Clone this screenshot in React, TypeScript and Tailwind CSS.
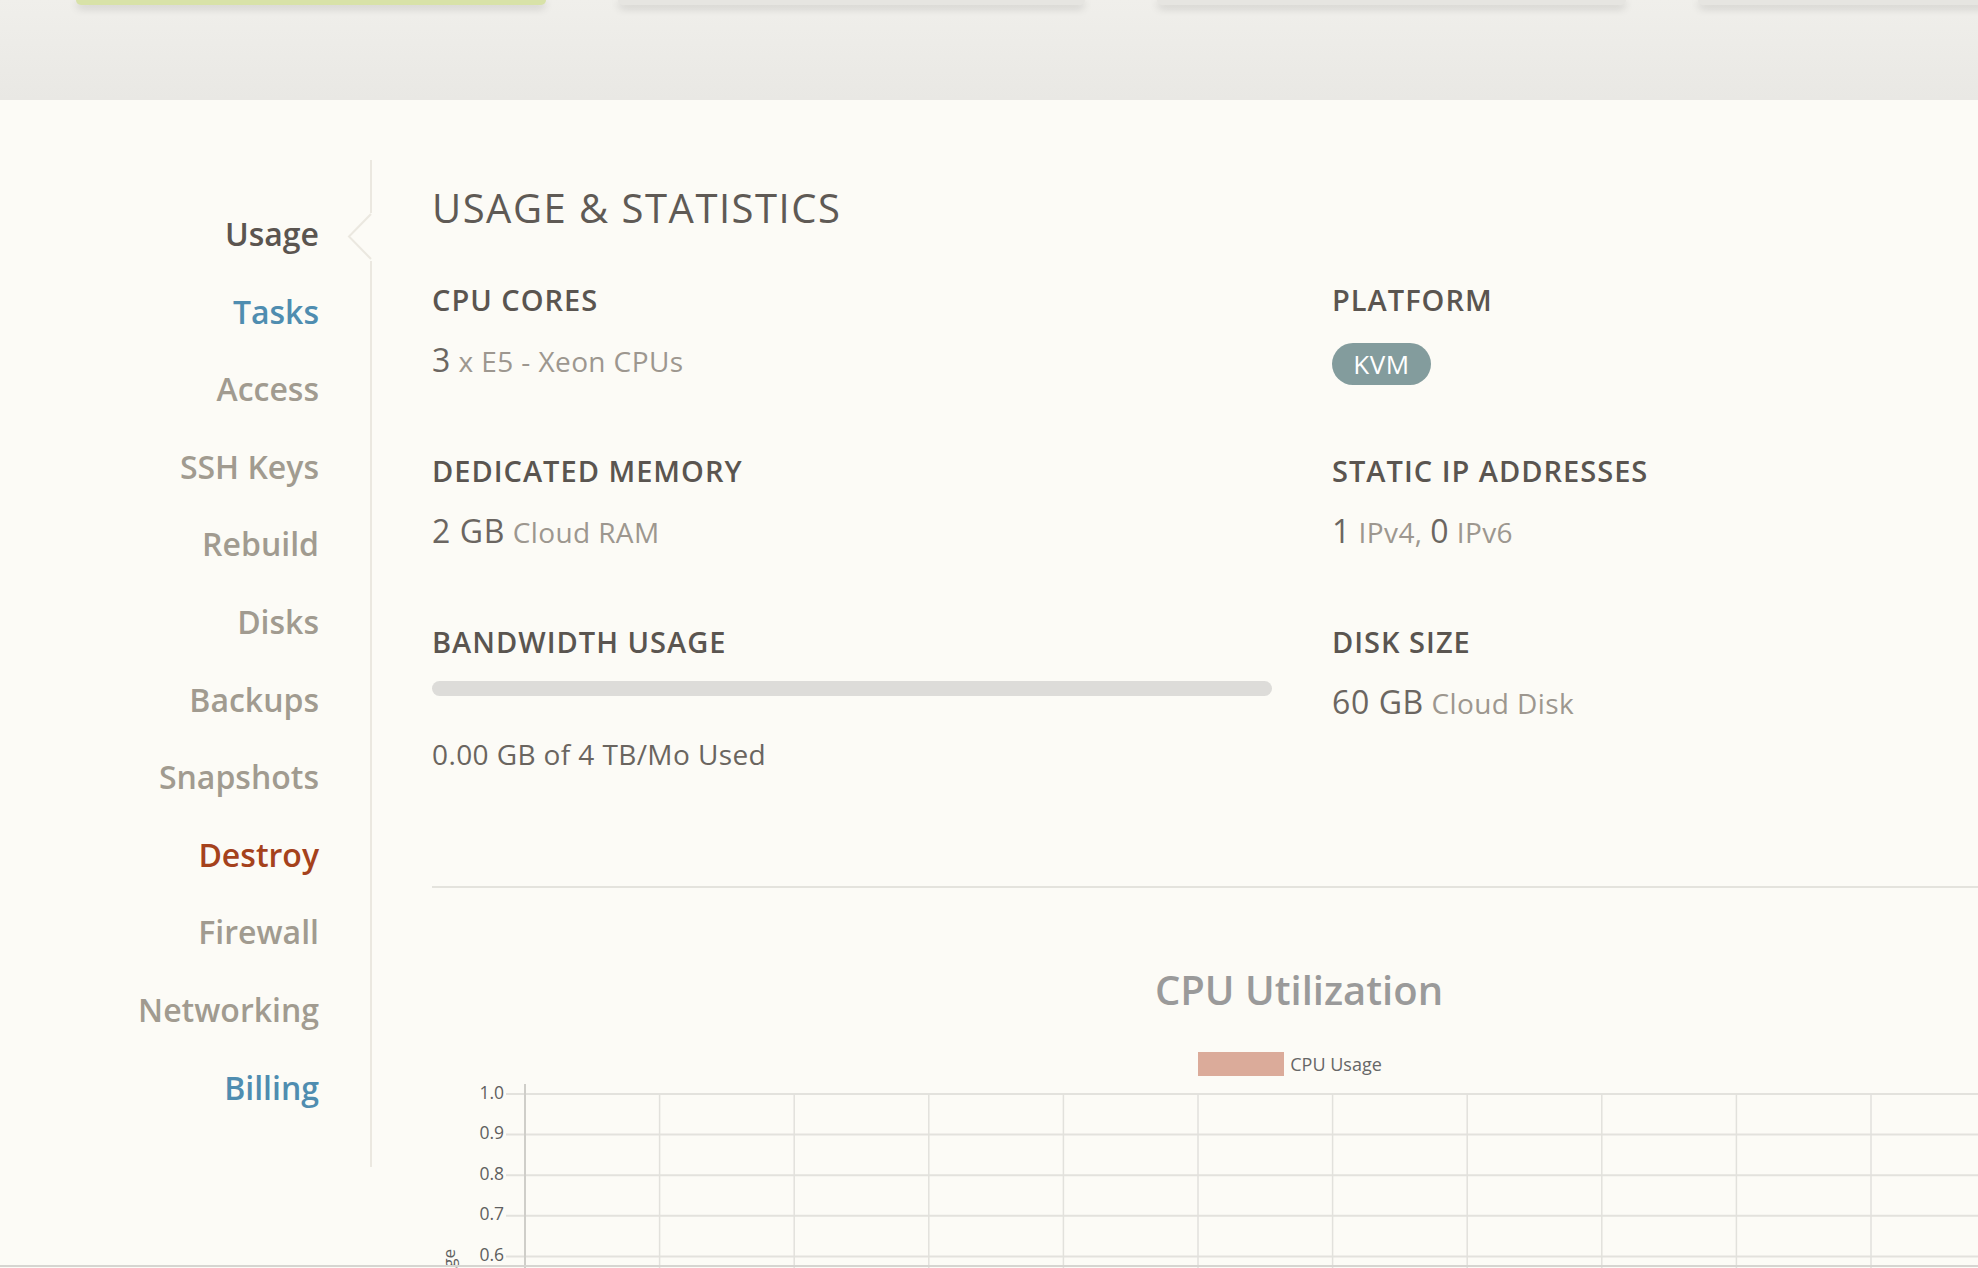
import React from "react";

const navItems: { label: string; color: string }[] = [
  { label: "Usage", color: "text-[#5b5550]" },
  { label: "Tasks", color: "text-[#4f8db0]" },
  { label: "Access", color: "text-[#a19b90]" },
  { label: "SSH Keys", color: "text-[#a19b90]" },
  { label: "Rebuild", color: "text-[#a19b90]" },
  { label: "Disks", color: "text-[#a19b90]" },
  { label: "Backups", color: "text-[#a19b90]" },
  { label: "Snapshots", color: "text-[#a19b90]" },
  { label: "Destroy", color: "text-[#a5421c]" },
  { label: "Firewall", color: "text-[#a19b90]" },
  { label: "Networking", color: "text-[#a19b90]" },
  { label: "Billing", color: "text-[#4f8db0]" },
];

function Heading({ children }: { children: React.ReactNode }) {
  return (
    <div className="text-[29px] leading-[28px] font-semibold tracking-[1px] text-[#5a5550] whitespace-nowrap">
      {children}
    </div>
  );
}

function Value({ children }: { children: React.ReactNode }) {
  return (
    <div className="mt-[26px] text-[28px] leading-[40px] tracking-[0.4px] text-[#9d978f] whitespace-nowrap">
      {children}
    </div>
  );
}

function Num({ children }: { children: React.ReactNode }) {
  return <span className="text-[32px] leading-[40px] tracking-[0.6px] text-[#6b6661]">{children}</span>;
}

function Chart() {
  const width = 1734;
  const axisX = 93;
  const vx: number[] = [];
  for (let i = 0; i < 13; i++) vx.push(axisX + 134.6 * i);
  const labels = ["1.0", "0.9", "0.8", "0.7", "0.6", "0.5"];
  return (
    <svg width={width} height={200} className="block mt-[4px]">
      {labels.map((l, k) => {
        const y = 14 + 40.6 * k;
        return (
          <g key={l}>
            <line x1={74} x2={width} y1={y} y2={y} stroke="#e3e2dd" strokeWidth={2} />
            <text
              x={72}
              y={y}
              textAnchor="end"
              dominantBaseline="middle"
              fontSize={17.5}
              fill="#5f5f5f"
              fontFamily="'Open Sans', sans-serif"
            >
              {l}
            </text>
          </g>
        );
      })}
      {vx.map((x, i) => (
        <line
          key={i}
          x1={x}
          x2={x}
          y1={i === 0 ? 4 : 14}
          y2={200}
          stroke={i === 0 ? "#cfcec9" : "#e2e1dc"}
          strokeWidth={i === 0 ? 2 : 1.5}
        />
      ))}
      <text
        transform="translate(18,169) rotate(-90)"
        textAnchor="end"
        dominantBaseline="middle"
        fontSize={17}
        fill="#5f5f5f"
        fontFamily="'Open Sans', sans-serif"
      >
        CPU Usage Percentage
      </text>
    </svg>
  );
}

export default function App() {
  return (
    <div className="relative w-[1978px] h-[1268px] overflow-hidden bg-[#fcfbf6] font-['Open_Sans',sans-serif]">
      {/* header */}
      <div className="h-[100px] bg-gradient-to-b from-[#f0efeb] to-[#e9e8e4] relative">
        <div className="flex gap-[72px] pl-[76px]">
          <div className="w-[470px] h-[5px] bg-[#d8e2a8] rounded-b-[10px] shadow-[0_3px_8px_rgba(0,0,0,0.18)] shrink-0" />
          <div className="w-[467px] h-[5px] bg-[#e6e5e1] rounded-b-[10px] shadow-[0_3px_8px_rgba(0,0,0,0.18)] shrink-0" />
          <div className="w-[469px] h-[5px] bg-[#e6e5e1] rounded-b-[10px] shadow-[0_3px_8px_rgba(0,0,0,0.18)] shrink-0" />
          <div className="w-[469px] h-[5px] bg-[#e6e5e1] rounded-b-[10px] shadow-[0_3px_8px_rgba(0,0,0,0.18)] shrink-0" />
        </div>
      </div>

      {/* body */}
      <div className="flex pt-[60px]">
        {/* sidebar */}
        <div className="relative w-[372px] h-[1007px] shrink-0 border-r-2 border-[#ebe8e0] pt-[35px] pr-[51px]">
          {navItems.map((n) => (
            <div
              key={n.label}
              className={`h-[77.6px] leading-[77.6px] text-right text-[32px] font-semibold whitespace-nowrap ${n.color}`}
            >
              {n.label}
            </div>
          ))}
          <svg
            className="absolute right-[-2px] top-[53px]"
            width={26}
            height={48}
            viewBox="0 0 26 48"
          >
            <rect x={23} y={0} width={3} height={48} fill="#fcfbf6" />
            <polyline
              points="25,1 3,23.5 25,46"
              fill="none"
              stroke="#ebe8e0"
              strokeWidth={2}
            />
          </svg>
        </div>

        {/* main */}
        <div className="w-[1734px] shrink-0 ml-[60px]">
          <div className="mt-[27.5px] text-[40px] leading-[40px] tracking-[1.5px] text-[#5f5a55] whitespace-nowrap">
            USAGE &amp; STATISTICS
          </div>

          <div className="mt-[58.5px] grid grid-cols-[840px_1fr] gap-x-[60px]">
            <div className="h-[171px]">
              <Heading>CPU CORES</Heading>
              <Value>
                <Num>3</Num> x E5 - Xeon CPUs
              </Value>
            </div>
            <div className="h-[171px]">
              <Heading>PLATFORM</Heading>
              <div className="mt-[29px] w-[99px] h-[42px] rounded-full bg-[#839c9d] flex items-center justify-center text-white text-[26px] tracking-[0.5px]">
                KVM
              </div>
            </div>
            <div className="h-[171px]">
              <Heading>DEDICATED MEMORY</Heading>
              <Value>
                <Num>2 GB</Num> Cloud RAM
              </Value>
            </div>
            <div className="h-[171px]">
              <Heading>STATIC IP ADDRESSES</Heading>
              <Value>
                <Num>1</Num> IPv4, <Num>0</Num> IPv6
              </Value>
            </div>
            <div className="h-[171px]">
              <Heading>BANDWIDTH USAGE</Heading>
              <div className="mt-[25px] w-[840px] h-[15px] rounded-full bg-[#dddcd9]" />
              <div className="mt-[37.5px] text-[28px] leading-[40px] tracking-[0.4px] text-[#6a655f] whitespace-nowrap">
                0.00 GB of 4 TB/Mo Used
              </div>
            </div>
            <div className="h-[171px]">
              <Heading>DISK SIZE</Heading>
              <Value>
                <Num>60 GB</Num> Cloud Disk
              </Value>
            </div>
          </div>

          <div className="mt-[87px] h-[2px] w-full bg-[#e4e3dd]" />

          <div className="mt-[81.5px] text-center text-[40px] leading-[40px] font-semibold text-[#9a9a9a] whitespace-nowrap">
            CPU Utilization
          </div>
          <div className="mt-[42.5px] flex justify-center items-center gap-[6px] pr-[18px]">
            <div className="w-[86px] h-[24px] bg-[#dbab9a]" />
            <div className="text-[18px] leading-[24px] text-[#666]">CPU Usage</div>
          </div>
          <Chart />
        </div>
      </div>

      <div className="absolute left-0 right-0 top-[1265px] h-[2px] bg-[#d6d5d1]" />
    </div>
  );
}
